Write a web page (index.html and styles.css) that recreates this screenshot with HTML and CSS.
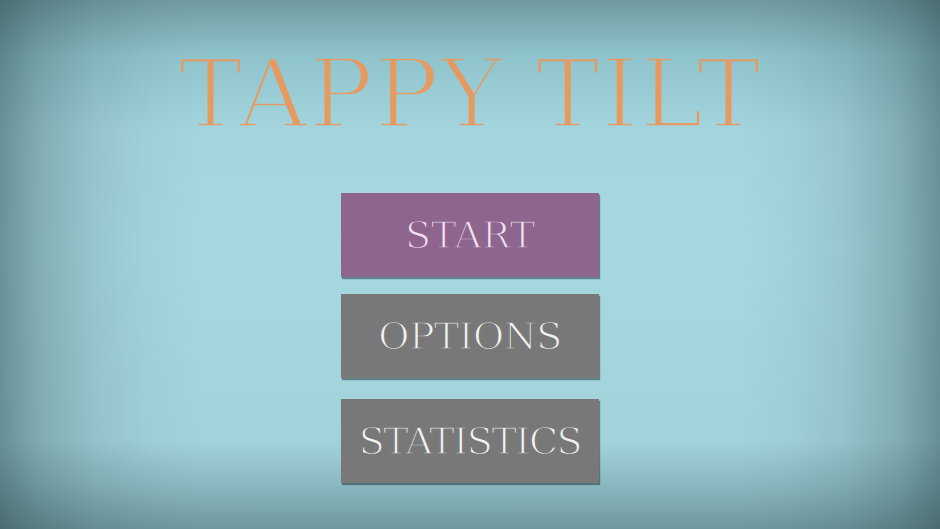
FILE: index.html
```html
<!DOCTYPE html>
<html>
<head>
<meta charset="utf-8">
<link rel="stylesheet" href="styles.css">
</head>
<body>
<main class="screen">
  <svg class="title" width="940" height="126" viewBox="0 0 940 126" role="heading" aria-level="1">
    <defs>
      <linearGradient id="bgfade" gradientUnits="userSpaceOnUse" x1="0" y1="-32" x2="0" y2="497">
        <stop offset="0" stop-color="#6f9aa0"/>
        <stop offset="0.104" stop-color="#8fc3cb"/>
        <stop offset="0.2457" stop-color="#a4d5de"/>
        <stop offset="0.4726" stop-color="#a6d8e0"/>
        <stop offset="0.8318" stop-color="#a2d3db"/>
        <stop offset="0.9168" stop-color="#8ab8c0"/>
        <stop offset="1" stop-color="#6e979d"/>
      </linearGradient>
    </defs>
    <text class="title-text" x="470" y="95" text-anchor="middle" stroke="url(#bgfade)">TAPPY TILT</text>
  </svg>
  <nav class="menu">
    <div class="btn btn-start"><span class="btn-text">START</span></div>
    <div class="btn btn-gray btn-options"><span class="btn-text">OPTIONS</span></div>
    <div class="btn btn-gray btn-stats"><span class="btn-text">STATISTICS</span></div>
  </nav>
</main>
</body>
</html>
```
FILE: styles.css
```css
html, body {
  margin: 0;
  padding: 0;
  width: 940px;
  height: 529px;
  overflow: hidden;
}
.screen {
  width: 940px;
  height: 529px;
  display: flex;
  flex-direction: column;
  align-items: center;
  background:
    linear-gradient(to right, rgba(20, 45, 50, 0.41) 0px, rgba(20, 45, 50, 0.24) 40px, rgba(20, 45, 50, 0.1) 95px, rgba(20, 45, 50, 0.03) 150px, rgba(20, 45, 50, 0) 200px),
    linear-gradient(to left, rgba(20, 45, 50, 0.41) 0px, rgba(20, 45, 50, 0.24) 40px, rgba(20, 45, 50, 0.1) 95px, rgba(20, 45, 50, 0.03) 150px, rgba(20, 45, 50, 0) 200px),
    linear-gradient(to bottom, #6f9aa0 0px, #8fc3cb 55px, #a4d5de 130px, #a6d8e0 250px, #a2d3db 440px, #8ab8c0 485px, #6e979d 529px);
  font-family: "DejaVu Serif", "Liberation Serif", serif;
}
.title {
  display: block;
  margin-top: 32px;
  flex: none;
}
.title-text {
  font-family: "DejaVu Serif", "Liberation Serif", serif;
  font-size: 96px;
  letter-spacing: 1px;
  fill: #e69a60;
  stroke-width: 3.4px;
}
.menu {
  margin-top: 35px;
  display: flex;
  flex-direction: column;
  align-items: center;
}
.btn {
  width: 258px;
  height: 84px;
  display: flex;
  align-items: center;
  justify-content: center;
  font-size: 38px;
  line-height: 1;
  box-shadow: 1px 2px 1px rgba(40, 60, 70, 0.55);
}
.btn-text {
  white-space: nowrap;
  -webkit-text-stroke: 1.3px currentColor;
}
.btn-start {
  background: #8e658d;
  color: #f4dff2;
}
.btn-start .btn-text {
  -webkit-text-stroke-color: #8e658d;
}
.btn-gray {
  background: #787878;
  color: #f2f2f2;
}
.btn-gray .btn-text {
  -webkit-text-stroke-color: #787878;
}
.btn-options {
  margin-top: 17px;
}
.btn-options .btn-text {
  letter-spacing: -0.6px;
}
.btn-stats {
  margin-top: 21px;
}
.btn-stats .btn-text {
  letter-spacing: -1.4px;
}
```
